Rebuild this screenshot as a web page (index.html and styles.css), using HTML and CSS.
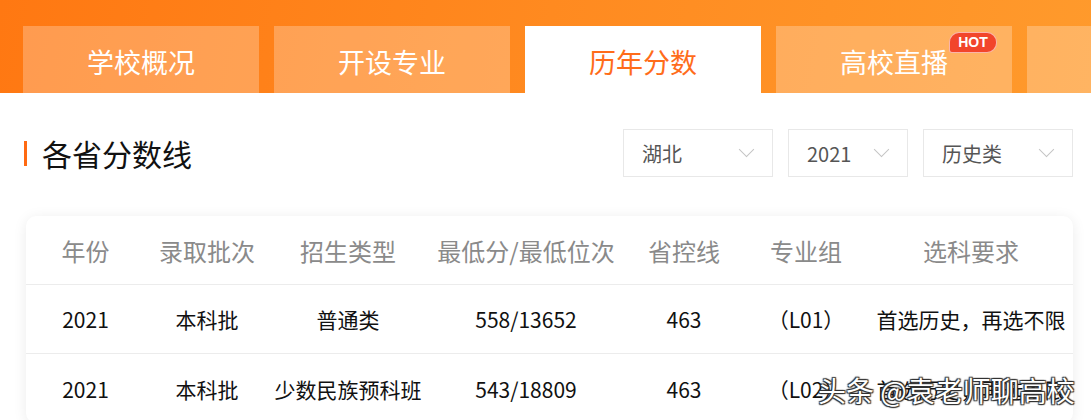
FILE: index.html
```html
<!DOCTYPE html>
<html lang="zh-CN">
<head>
  <meta charset="UTF-8" />
  <meta name="viewport" content="width=device-width, initial-scale=1.0"/>
  <title>历年分数</title>
  <link rel="stylesheet" href="styles.css">
</head>
<body>
  <div class="top">
    <div class="tab">学校概况</div>
    <div class="tab">开设专业</div>
    <div class="tab active">历年分数</div>
    <div class="tab">高校直播<span class="hot">HOT</span></div>
    <div class="tab">招生计划</div>
  </div>

  <div class="title-row">
    <h2 class="title">各省分数线</h2>
    <div class="filters">
      <div class="select s-prov">湖北<i class="arrow"></i></div>
      <div class="select s-year">2021<i class="arrow"></i></div>
      <div class="select s-type">历史类<i class="arrow"></i></div>
    </div>
  </div>

  <div class="card">
    <div class="row head">
      <div>年份</div>
      <div>录取批次</div>
      <div>招生类型</div>
      <div>最低分/最低位次</div>
      <div>省控线</div>
      <div>专业组</div>
      <div>选科要求</div>
    </div>
    <div class="row">
      <div>2021</div>
      <div>本科批</div>
      <div>普通类</div>
      <div>558/13652</div>
      <div>463</div>
      <div>（L01）</div>
      <div>首选历史，再选不限</div>
    </div>
    <div class="row">
      <div>2021</div>
      <div>本科批</div>
      <div>少数民族预科班</div>
      <div>543/18809</div>
      <div>463</div>
      <div>（L02）</div>
      <div>首选历史，再选不限</div>
    </div>
  </div>

  <div class="watermark">头条 @袁老师聊高校</div>
</body>
</html>
```

FILE: styles.css
```css
* { box-sizing: border-box; }
body { margin: 0; background: #fff; font-family: "Noto Sans CJK SC", "Noto Sans", sans-serif; color: #111; overflow: hidden; height: 420px; position: relative; }

.top { height: 93px; padding: 26px 0 0 23px; display: flex; gap: 15px; overflow: hidden; background: linear-gradient(100deg, #ff7812 0%, #ff8a20 50%, #ff9a2c 100%); }
.tab { flex: 0 0 236px; height: 67px; line-height: 71px; text-align: center; font-size: 27px; color: #fff; background: rgba(255,255,255,0.26); position: relative; }
.tab.active { background: #fff; color: #ff6c1a; }
.hot { position: absolute; left: 173px; top: 6px; width: 48px; height: 21px; line-height: 19px; font-size: 14px; font-weight: bold; color: #fff; background: #f2452b; border: 1px solid rgba(255,255,255,0.6); border-radius: 10px 10px 10px 3px; font-family: "Liberation Sans", Arial, sans-serif; }

.title-row { display: flex; justify-content: space-between; align-items: center; margin-top: 36px; height: 48px; padding: 0 18px 0 24px; }
.title { margin: 0; font-size: 30px; font-weight: normal; color: #111; display: flex; align-items: center; gap: 15px; }
.title::before { content: ""; width: 3px; height: 25px; background: #ff6a12; }
.filters { display: flex; gap: 15px; }
.select { height: 48px; border: 1px solid #e8e8e8; padding-left: 18px; display: flex; align-items: center; justify-content: space-between; padding-right: 20px; font-size: 20px; color: #555; }
.s-prov { width: 150px; }
.s-year { width: 120px; }
.s-type { width: 150px; }
.arrow { width: 11px; height: 11px; border-right: 1.5px solid #c4c4c4; border-bottom: 1.5px solid #c4c4c4; transform: rotate(45deg); margin-top: -7px; }

.card { margin: 39px 0 0 26px; width: 1047px; border-radius: 10px; background: #fff; box-shadow: 0 2px 14px rgba(0,0,0,0.08); overflow: hidden; }
.row { display: grid; grid-template-columns: 119px 124px 158px 198px 118px 126px 1fr; height: 69px; align-items: center; text-align: center; font-size: 21px; border-bottom: 1px solid #ececec; }
.row.head { font-size: 24px; color: #8a8a8a; }
.row:last-child { border-bottom: none; }

.watermark { position: absolute; left: 818px; top: 370px; font-size: 28px; color: #fff; letter-spacing: 0; white-space: nowrap; text-shadow: 0 0 1px #222, 1px 1px 1px #333, -1px -1px 1px #333, 1px -1px 1px #333, -1px 1px 1px #333; }
```
